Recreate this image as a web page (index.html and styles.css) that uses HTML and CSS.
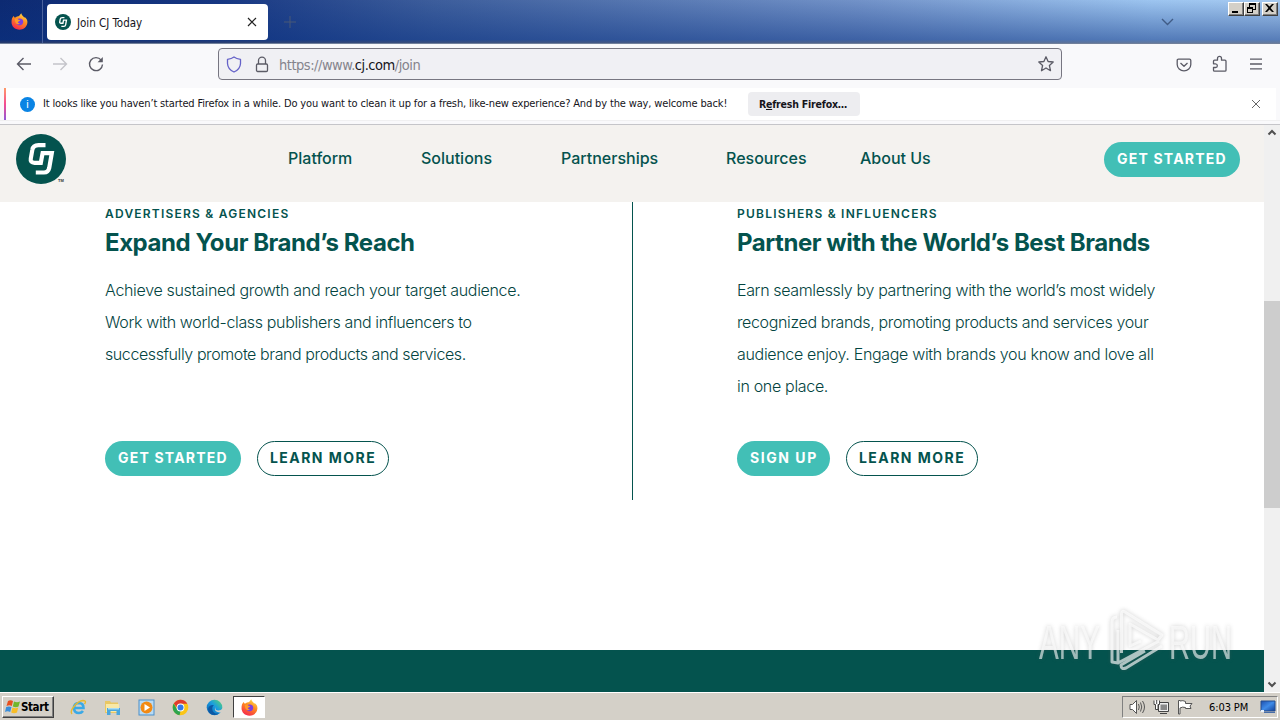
FILE: index.html
```html
<!DOCTYPE html>
<html lang="en">
<head>
<meta charset="utf-8">
<title>Join CJ Today</title>
<link rel="stylesheet" href="styles.css">
</head>
<body>
<svg class="defs" width="0" height="0">
  <defs>
    <linearGradient id="flame" x1=".8" y1="0" x2=".3" y2="1"><stop offset="0" stop-color="#ffe14a"/><stop offset=".45" stop-color="#ff8a1f"/><stop offset="1" stop-color="#f5264f"/></linearGradient>
    <linearGradient id="edgeBlue" x1="0" y1="1" x2="1" y2="0"><stop offset="0" stop-color="#0b5cad"/><stop offset=".55" stop-color="#1a9de0"/><stop offset="1" stop-color="#5ddb6a"/></linearGradient>
    <linearGradient id="screen" x1="0" y1="0" x2="1" y2="1"><stop offset="0" stop-color="#1c4fae"/><stop offset=".5" stop-color="#3f8be8"/><stop offset="1" stop-color="#123f98"/></linearGradient>
    <symbol id="firefox" viewBox="0 0 16 16">
      <path fill="url(#flame)" d="M1 5 2.4 2.8 3.6 4.4 5.6 3.3C8 3.2 8.4 1.5 9.7.2 10 2 11.3 2.5 12.2 4L13.4 4.2C15 5.5 15.7 7.5 15.4 9.5 14.8 13.4 11.6 15.8 8 15.8 3.7 15.8.5 12.6.5 8.8.5 7.3.6 6.2 1 5z"/>
      <path fill="#7c3fe0" d="M5.1 6.5C6.4 5 9 4.5 10.5 5.9 12.4 7.8 11.5 11.2 8.5 11.5 5.8 11.7 4.2 9.5 5.1 6.5z"/>
      <path fill="#ff9a28" d="M3.5 5.8C5 4.8 6.4 5.5 7 6.3L8.8 6.8 7.2 8.1C5.8 8.6 6.5 10 8.4 9.6 6.6 11.7 3.6 10 3.5 5.8z"/>
    </symbol>
    <symbol id="cj" viewBox="0 0 50 50">
      <circle cx="25" cy="25" r="25" fill="#04534e"/>
      <path fill="none" stroke="#fff" stroke-width="4.2" d="M29.5 11.200H22.500Q17 11.200 16.300 16L14.800 24.500Q14 28.800 18.500 28.800H24.800L26.600 19.200H35.800L33.200 34Q32.200 38.500 28 38.500H19.800"/>
    </symbol>
  </defs>
</svg>

<header class="tabbar">
  <div class="fx-view"><svg width="17" height="17"><use href="#firefox"/></svg></div>
  <div class="tab">
    <svg width="16" height="16"><use href="#cj"/></svg>
    <span class="tab-title">Join CJ Today</span>
    <svg class="tab-close" width="10" height="10" viewBox="0 0 10 10"><path d="M1 1 9 9M9 1 1 9"/></svg>
  </div>
  <svg class="new-tab" width="12" height="12" viewBox="0 0 12 12"><path d="M6 0V12M0 6H12"/></svg>
  <svg class="all-tabs" width="13" height="8" viewBox="0 0 13 8"><path d="M1 1 6.500 6.500 12 1"/></svg>
  <div class="win-buttons">
    <span><svg width="13" height="11" viewBox="0 0 13 11"><path d="M3 8H9V10H3z"/></svg></span>
    <span><svg width="13" height="11" viewBox="0 0 13 11"><path fill-rule="evenodd" d="M4 0H11V7H8V10H2V4H4zM5 2V4H8V6H10V2zM3 6V9H7V6z"/></svg></span>
    <span class="gap"><svg width="13" height="11" viewBox="0 0 13 11"><path d="M2 1H4L6.500 3.600 9 1H11L7.600 5 11 9H9L6.500 6.400 4 9H2L5.400 5z"/></svg></span>
  </div>
</header>

<nav class="toolbar">
  <svg class="nav-icon" viewBox="0 0 16 16"><path d="M15 8H1.500M7.500 2 1.500 8 7.500 14"/></svg>
  <svg class="nav-icon disabled" viewBox="0 0 16 16"><path d="M1 8H14.500M8.500 2 14.500 8 8.500 14"/></svg>
  <svg class="nav-icon" viewBox="0 0 16 16"><path d="M13.200 4.200A6.500 6.500 0 1 0 14.500 8.500"/><path class="solid" d="M14.800 1V6.200H9.600z"/></svg>
  <div class="urlbar">
    <svg class="shield" width="16" height="17" viewBox="0 0 16 17"><path d="M8 1C6 2.500 4 3 1.500 3.300V7.500C1.700 11.500 4 14.300 8 16 12 14.300 14.300 11.500 14.500 7.500V3.300C12 3 10 2.500 8 1z"/></svg>
    <svg class="lock" width="14" height="17" viewBox="0 0 14 17"><path d="M3.500 8V4.600A3.500 3.500 0 0 1 10.500 4.600V8"/><rect x="1.500" y="8" width="11" height="7.500" rx="1.200"/></svg>
    <span class="url">https://www.<b>cj.com</b>/join</span>
    <svg class="star" width="18" height="18" viewBox="0 0 18 18"><path d="M9 1.800 11.100 6.500 16.200 7 12.400 10.500 13.500 15.700 9 13 4.500 15.700 5.600 10.500 1.800 7 6.900 6.500z"/></svg>
  </div>
  <div class="tools">
    <svg width="16" height="16" viewBox="0 0 16 16"><path d="M2.500 2.200H13.500Q14.800 2.200 14.800 3.500V7.500A6.800 6.300 0 0 1 1.200 7.500V3.500Q1.200 2.200 2.500 2.200zM4.500 6 8 9.300 11.500 6"/></svg>
    <svg width="16" height="18" viewBox="0 0 16 18"><path d="M5.500 5.200V3.400A2 2 0 0 1 9.500 3.400V5.200H13Q14 5.200 14 6.200V15.200Q14 16.200 13 16.200H2.500Q1.500 16.200 1.500 15.200V12.500H3.500A1.800 1.800 0 0 0 3.500 8.800H1.500V6.200Q1.500 5.200 2.500 5.200z"/></svg>
    <svg width="14" height="14" viewBox="0 0 14 14"><path d="M1 2.200H13M1 7H13M1 11.800H13"/></svg>
  </div>
</nav>

<div class="notice">
  <i class="info">i</i>
  <span class="notice-text">It looks like you haven’t started Firefox in a while. Do you want to clean it up for a fresh, like-new experience? And by the way, welcome back!</span>
  <button class="refresh">R<u>e</u>fresh Firefox…</button>
  <svg class="notice-close" width="10" height="10" viewBox="0 0 10 10"><path d="M1 1 9 9M9 1 1 9"/></svg>
</div>

<div class="viewport">
  <div class="page">
    <div class="site-header">
      <div class="logo"><svg width="50" height="50"><use href="#cj"/></svg><small>TM</small></div>
      <div class="menu">
        <a class="m1">Platform</a><a class="m2">Solutions</a><a class="m3">Partnerships</a><a class="m4">Resources</a><a class="m5">About Us</a>
      </div>
      <a class="btn btn-teal">GET STARTED</a>
    </div>
    <main class="columns">
      <section>
        <h4>ADVERTISERS &amp; AGENCIES</h4>
        <h2>Expand Your Brand’s Reach</h2>
        <p>Achieve sustained growth and reach your target audience.<br><span class="tight">Work with world-class publishers and influencers to</span><br><span class="tighter">successfully promote brand products and services.</span></p>
        <div class="actions"><a class="btn btn-teal">GET STARTED</a><a class="btn btn-line">LEARN MORE</a></div>
      </section>
      <section>
        <h4>PUBLISHERS &amp; INFLUENCERS</h4>
        <h2>Partner with the World’s Best Brands</h2>
        <p><span class="tight">Earn seamlessly by partnering with the world’s most widely</span><br><span class="tight">recognized brands, promoting products and services your</span><br>audience enjoy. Engage with brands you know and love all<br>in one place.</p>
        <div class="actions"><a class="btn btn-teal signup">SIGN UP</a><a class="btn btn-line">LEARN MORE</a></div>
      </section>
    </main>
    <div class="site-band"></div>
  </div>
  <div class="scrollbar">
    <svg width="10" height="7" viewBox="0 0 10 7"><path d="M1.500 5.500 5 2 8.500 5.500"/></svg>
    <div class="thumb"></div>
    <svg class="down" width="10" height="7" viewBox="0 0 10 7"><path d="M1.500 1.500 5 5 8.500 1.500"/></svg>
  </div>
  <svg class="watermark" width="200" height="66" viewBox="0 0 200 66">
    <g class="wm-text"><text x="4" y="51" textLength="61" lengthAdjust="spacingAndGlyphs">ANY</text><text x="134" y="51" textLength="63" lengthAdjust="spacingAndGlyphs">RUN</text></g>
    <path class="wm-mark" d="M86.500 45V6Q86.500 2 90 4L127 27 123 32 95 16V38L106 33M82 9Q77 9 77 14V54L83 55V22M83 55 124 33M127 38 91 60Q86 62 86 57L110 43"/>
  </svg>
</div>

<footer class="taskbar">
  <div class="start">
    <svg width="16" height="16" viewBox="0 0 16 16"><path fill="#e8501f" d="M3 2Q5.500 .5 8 2L6.800 7Q4.500 5.600 1.500 7z"/><path fill="#72b62b" d="M9 2.500Q12 4 15 2.500L13.500 7.500Q11 9 7.800 7.500z"/><path fill="#398edb" d="M1.200 8Q4 6.800 6.500 8L5.200 13Q2.500 11.500 0 13z"/><path fill="#f8bd26" d="M7.500 8.500Q10.500 10 13.200 8.500L12 13.500Q9 15 6.200 13.500z"/></svg>
    <b>Start</b>
  </div>
  <div class="quick">
    <svg width="17" height="17" viewBox="0 0 17 17"><path fill="none" stroke="#3ba9e6" stroke-width="2.600" d="M4 9H13.500Q13.500 4 8.800 4 4 4.200 4 9.200 4.200 14 9 14 11.500 14 13 12"/><path fill="none" stroke="#e7b930" stroke-width="1.400" d="M2 15C-1 12 7 2 13 1.500 16 1.500 16 3 14.500 5"/></svg>
    <svg width="17" height="17" viewBox="0 0 17 17"><path fill="#e9c763" d="M1 2H6L7 3.500H14V14H1z"/><path fill="#f8e8a6" d="M2 5H15V13H2z"/><path fill="#4aa6dc" d="M3 9H16V16H12.500V12H6.500V16H3z"/><path fill="#a8dcf5" d="M4 9H15V10.500H4z"/></svg>
    <svg width="17" height="17" viewBox="0 0 17 17"><rect x="1" y="1" width="15" height="15" fill="#b9dbf4" stroke="#4b8fca"/><circle cx="8.500" cy="8.500" r="6" fill="#f28a14"/><path fill="#fff" d="M6.500 5 12 8.500 6.500 12z"/></svg>
    <svg width="17" height="17" viewBox="0 0 17 17"><circle cx="8.500" cy="8.500" r="7.800" fill="#fbc516"/><path fill="#df3b2f" d="M8.500 8.500H5L1.800 4.500A7.800 7.800 0 0 1 15.300 4.700H8.500z"/><path fill="#2da44e" d="M1.700 4.600 5.200 10.500 8.500 12.300 7.500 16.200A7.800 7.800 0 0 1 1.700 4.600z"/><circle cx="8.500" cy="8.500" r="3.900" fill="#fff"/><circle cx="8.500" cy="8.500" r="3" fill="#3479e8"/></svg>
    <svg width="17" height="17" viewBox="0 0 17 17"><circle cx="8.500" cy="8.500" r="7.800" fill="url(#edgeBlue)"/><path fill="#0c59a4" d="M2 10Q3 5.500 8 6 5.500 8 6.500 11.500 8 15.500 13.500 14.300 9 17.500 4.500 14.800 2 13 2 10z"/><path fill="#d4d0c8" d="M9.500 8Q8.500 11.500 12.500 11.500 15 11.500 16.500 9.500V12.500Q14 14 11.500 13 7.500 11.500 9.500 8z"/></svg>
  </div>
  <div class="task-active"><svg width="17" height="17"><use href="#firefox"/></svg></div>
  <div class="tray">
    <svg width="17" height="16" viewBox="0 0 17 16"><path fill="#fff" stroke="#555" d="M1 5.500H3.500L7.500 1.500V14.500L3.500 10.500H1z"/><path fill="none" stroke="#555" d="M9.500 5Q11 8 9.500 11M11.500 3.500Q14 8 11.500 12.500M13.500 2Q17.500 8 13.500 14"/></svg>
    <svg width="17" height="16" viewBox="0 0 17 16"><path fill="#eee" stroke="#444" d="M5.500 3.500H15.500V12.500H5.500zM7 14.500H14"/><path fill="#888" d="M7.500 5.500H14V11H7.500z"/><path fill="#fff" stroke="#444" d="M1 1.500V5.500H2.500V10.500H5V5.500H6.500V1.500M3.700 1V5"/></svg>
    <svg width="17" height="16" viewBox="0 0 17 16"><path fill="#fff" stroke="#555" d="M1.500 15V1.500H3V2Q6 1 8.500 2.500V4.500H15L13 7 14 9.500H8.500V8.500Q5.500 7.500 3 9V15z"/></svg>
    <span class="clock">6:03 PM</span>
    <svg class="desk" width="16" height="14" viewBox="0 0 16 14"><path fill="url(#screen)" stroke="#244d8d" d="M1 1H15V11H1z"/><path fill="#e9f3ff" d="M1 10H4V12H1z"/><path fill="#486ea8" d="M4 12H15V13H4z"/></svg>
  </div>
</footer>
</body>
</html>
```
FILE: styles.css
```css
*{box-sizing:border-box}
body{margin:0;width:1280px;height:720px;overflow:hidden;display:flex;flex-direction:column;background:#fff;font:11px "DejaVu Sans Condensed","DejaVu Sans",sans-serif;color:#15141a}
svg{display:block;flex:none;overflow:visible}
.defs{position:absolute}

/* browser chrome */
.tabbar{height:44px;flex:none;display:flex;align-items:center;background:linear-gradient(180deg,rgba(10,50,130,0) 0%,rgba(10,50,130,.5) 92%,rgba(60,70,100,.6) 100%),linear-gradient(90deg,#0d2a72 0%,#173782 17%,#3d5e9c 34%,#7292c8 67%,#9dc5f0 90%,#a6caf0 100%);border-bottom:1px solid #71809b}
.fx-view{width:43px;height:43px;border-right:1px solid #4a629d;display:flex;align-items:center;padding-left:11px}
.tab{width:221px;height:36px;margin-left:4px;border-radius:4px;background:#fff;display:flex;align-items:center;padding:0 11px 0 8px}
.tab-title{margin-left:6px;font-size:11.5px;letter-spacing:-.02px;padding-top:2px;white-space:nowrap}
.tab-close{margin-left:auto;fill:none;stroke:#222;stroke-width:1.2}
.new-tab{margin-left:16px;fill:none;stroke:#485977}
.all-tabs{margin-left:865px;fill:none;stroke:#415c86;stroke-width:1.4}
.win-buttons{display:flex;align-self:flex-start;margin:2px 0 0 54px}
.win-buttons span{width:16px;height:14px;background:#d4d0c8;border:1px solid;border-color:#fff #404040 #404040 #fff;box-shadow:inset -1px -1px #808080}
.win-buttons .gap{margin-left:2px}
.toolbar{height:44px;flex:none;display:flex;align-items:center;background:#f9f9fb;padding:0 17px 4px 16px}
.nav-icon{width:16px;height:16px;margin-right:20px;fill:none;stroke:#5b5b66;stroke-width:1.4}
.nav-icon.disabled{stroke:#c4c4ca}
.nav-icon .solid{fill:#5b5b66;stroke:none}
.urlbar{width:844px;height:32px;margin-left:94px;border:1px solid #777681;border-radius:4px;background:#f0f0f4;display:flex;align-items:center;padding:0 6px 0 7px}
.urlbar svg,.tools svg{fill:none;stroke:#5b5b66;stroke-width:1.3;stroke-linejoin:round}
.urlbar .shield{stroke:#6461c8}
.lock{margin-left:13px}
.url{margin-left:10px;padding-top:1px;font:14.5px "DejaVu Sans Condensed","DejaVu Sans",sans-serif;letter-spacing:-.48px;color:#85848c}
.url b{font-weight:normal;color:#15141a}
.star{margin-left:auto}
.tools{margin-left:auto;display:flex;align-items:center;gap:20px}
.tools svg:last-child{margin-left:1px}
.tools svg:first-child{margin-top:1px}
.notice{height:37px;flex:none;display:flex;align-items:center;border-bottom:1px solid #c5c5c9;padding:0 19px 4px 20px;background:linear-gradient(#f0f0f1,#f0f0f1) 0 32px/100% 1px no-repeat,linear-gradient(#ff9a68,#f54c90 50%,#9059d8) 4px 0/2px 32px no-repeat,linear-gradient(#fff,#fff) 4px 0/1272px 32px no-repeat,#f9f9fb}
.info{width:15px;height:15px;border-radius:50%;background:#0a84e4;color:#fff;font:11px/15px "Liberation Sans",sans-serif;text-align:center}
.notice-text{margin-left:8px;padding-bottom:1px;letter-spacing:-.147px;white-space:nowrap;width:684px}
.refresh{margin-left:21px;width:112px;height:24px;border:0;border-radius:4px;background:#ededf0;font:bold 10.5px "DejaVu Sans Condensed",sans-serif;color:#15141a;padding:0 2px 0 0;letter-spacing:-.2px}
.notice-close{margin-left:auto;fill:none;stroke:#666}

/* page */
.viewport{height:567px;flex:none;display:flex;position:relative}
.page{width:1264px;display:flex;flex-direction:column;color:#04534e;font-family:Inter,"Open Sans",sans-serif}
.site-header{height:77px;display:flex;padding:9px 24px 0 16px;background:#f4f2ef}
.logo{position:relative;width:50px}
.logo small{position:absolute;left:42px;top:44px;font:bold 4px/5px "Liberation Sans",sans-serif;color:#333}
.menu{display:flex;width:1038px;padding:14px 0 0 222px;font-size:16px;line-height:20px;font-weight:500;white-space:nowrap}
.m1{width:133px}.m2{width:140px}.m3{width:165px}.m4{width:134px}
.btn{height:35px;border-radius:18px;padding:0 12px;font-size:14px;line-height:34px;font-weight:700;letter-spacing:1.45px;white-space:nowrap}
.btn-teal{width:136px;background:#42bfb6;color:#fff;padding-left:13px;letter-spacing:1.2px}
.btn-line{width:132px;border:1px solid #04534e;line-height:32px}
.site-header .btn{margin-top:8px}
.columns{height:448px;display:grid;grid-template-columns:633px 1fr;background:#fff}
.columns section{height:298px;padding:4px 0 0 105px}
.columns section:first-child{border-right:1px solid #04534e}
.columns section + section{padding-left:104px}
h4{margin:0;font-size:12px;line-height:15px;font-weight:600;letter-spacing:1.22px}
h2{margin:7px 0 0;font-size:24px;line-height:30px;font-weight:700;letter-spacing:-.45px;white-space:nowrap}
p{margin:16px 0 0;height:128px;font-size:16px;line-height:32px;font-weight:300;letter-spacing:-.32px;color:#03443f;white-space:nowrap}
.tight{letter-spacing:-.36px}
.tighter{letter-spacing:-.41px}
.actions{display:flex;gap:16px;margin-top:39px}
.signup{width:93px;letter-spacing:1.55px}
.site-band{height:42px;background:#04534e}
.scrollbar{width:16px;display:flex;flex-direction:column;align-items:center;background:#f0f0f0;padding:4px 0 4px}
.scrollbar svg{fill:none;stroke:#505050;stroke-width:2}
.thumb{width:16px;height:207px;margin-top:165px;background:#cdcdcd}
.down{margin-top:auto}
.watermark{position:absolute;left:1035px;top:483px;filter:drop-shadow(0 0 2px rgba(90,90,90,.45))}
.wm-text{font:49px "Liberation Sans Narrow","Liberation Sans",sans-serif;fill:rgba(255,255,255,.6)}
.wm-mark{fill:none;stroke:rgba(255,255,255,.65);stroke-width:3;stroke-linejoin:round}

/* taskbar */
.taskbar{height:28px;display:flex;align-items:center;background:#d4d0c8;border-top:1px solid #fff;padding:2px 2px 1px;color:#000}
.start{width:52px;height:22px;border:1px solid;border-color:#fff #404040 #404040 #fff;box-shadow:inset -1px -1px #808080;display:flex;align-items:center;padding-left:2px}
.start b{font-size:11.5px;letter-spacing:-.4px;margin-left:0}
.quick{display:flex;gap:17px;margin-left:16px}
.task-active{width:32px;height:22px;margin-left:10px;border:1px solid;border-color:#404040 #fff #fff #404040;background:#fff;display:flex;align-items:center;justify-content:center}
.tray{margin-left:auto;width:156px;height:22px;border:1px solid;border-color:#808080 #fff #fff #808080;display:flex;align-items:center;gap:7px;padding-left:6px}
.clock{width:40px;margin-left:8px;letter-spacing:-.1px;white-space:nowrap}
.desk{margin-left:4px}
```
